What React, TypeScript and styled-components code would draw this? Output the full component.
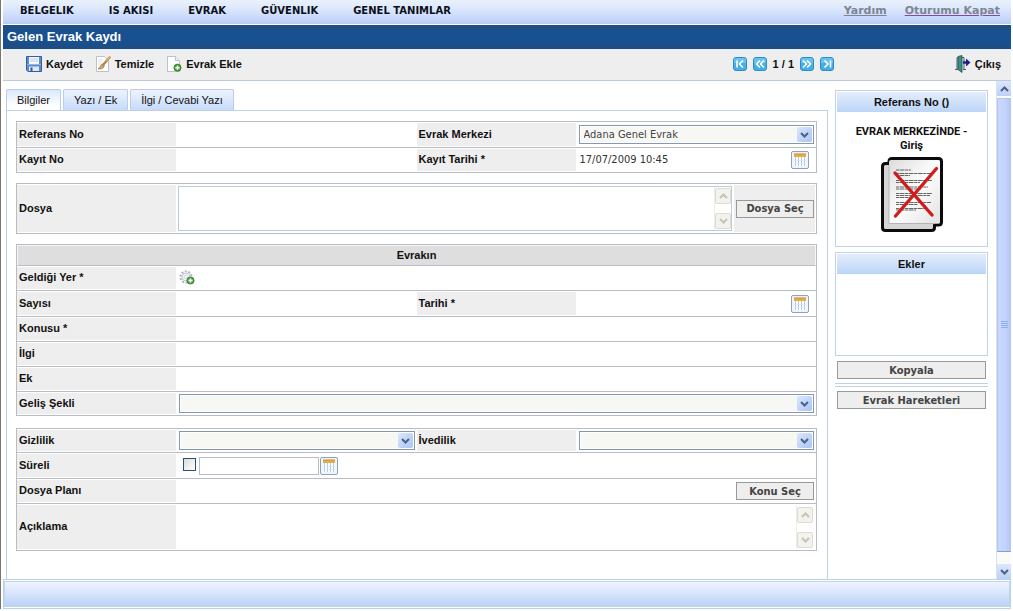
import React from "react";
import styled, { createGlobalStyle, css } from "styled-components";

const arial = `"Liberation Sans", Arial, sans-serif`;
const tahoma = `"DejaVu Sans Condensed", Tahoma, sans-serif`;
const verdana = `"DejaVu Sans", Verdana, sans-serif`;

const GlobalStyle = createGlobalStyle`
  *, *::before, *::after { box-sizing: border-box; }
  body { margin: 0; background: #fff; color: #111; font: 11px/14px ${arial}; }
  button, input, select, textarea { font: inherit; color: inherit; margin: 0; }
  button { cursor: pointer; }
  svg { display: block; flex: none; }
`;

const blueFade = css`
  background: linear-gradient(#e4edfb, #bcd5f8);
`;

/* ---------- page frame ---------- */

const Page = styled.div`
  display: flex;
  flex-direction: column;
  min-height: 100vh;
  padding-bottom: 2px;
`;

const Frame = styled.div`
  flex: 1;
  display: flex;
  flex-direction: column;
  border-left: 1px solid #7b766c;
  padding: 0 2px;
`;

const MenuBar = styled.header`
  display: flex;
  justify-content: space-between;
  height: 24px;
  padding: 0 11px 2px 17px;
  border-bottom: 1px solid #b4cfe8;
  background: linear-gradient(#e9f1fb, #dbe7fc 40%, #bdd0fa);
`;

const Menu = styled.nav`
  display: flex;
  align-items: center;
  gap: 35px;
`;

const MenuItem = styled.a`
  color: #0b0f1a;
  font: bold 10px/20px ${verdana};
  text-decoration: none;
`;

const Session = styled(Menu)`
  gap: 18px;
`;

const SessionLink = styled.a<{ $visited?: boolean }>`
  color: #7d8594;
  font: bold 11px/20px ${verdana};
  text-decoration: underline;
  text-decoration-color: ${(p) => (p.$visited ? "#8a4a90" : "#7d8594")};
`;

const TitleBar = styled.h1`
  height: 24px;
  margin: 1px 0 0;
  padding: 0 4px;
  background: linear-gradient(#1f4f7d, #195091 30%, #195091 70%, #204c7d);
  color: #fff;
  font: bold 13px/24px ${arial};
`;

const Toolbar = styled.div`
  display: flex;
  align-items: center;
  height: 32px;
  padding: 0 10px 3px 23px;
  border-top: 2px solid #e6f1fb;
  border-bottom: 1px solid #bccbd8;
  background: #eee;
`;

const Tools = styled.div`
  flex: 1;
  display: flex;
  gap: 12px;
`;

const ToolButton = styled.button`
  display: flex;
  align-items: center;
  gap: 4px;
  padding: 0;
  border: 0;
  background: none;
  font-weight: bold;
  line-height: 16px;
`;

const Pager = styled.div`
  display: flex;
  align-items: center;
  gap: 6px;
  font-weight: bold;
`;

const PagerButton = styled.button`
  display: block;
  padding: 0;
  border: 0;
  background: none;
`;

const ExitArea = styled.div`
  display: flex;
  justify-content: flex-end;
  width: 167px;
`;

/* ---------- content ---------- */

const Content = styled.div`
  flex: 1;
  display: flex;
`;

const Main = styled.main`
  flex: 1;
  display: flex;
  flex-direction: column;
  min-width: 0;
  padding: 8px 0 0 3px;
`;

const Tabs = styled.div`
  display: flex;
  gap: 2px;
`;

const Tab = styled.button<{ $active?: boolean }>`
  height: 21px;
  padding: 0 10px;
  border: 1px solid #b9cdee;
  border-bottom: 0;
  border-radius: 2px 2px 0 0;
  background: ${(p) => (p.$active ? "linear-gradient(#dce9fb, #fff 80%)" : "linear-gradient(#eef4fd, #c6dafa)")};
`;

const Sheet = styled.div`
  flex: 1;
  display: flex;
  flex-direction: column;
  gap: 10px;
  padding: 10px 10px 28px 9px;
  border: 1px solid #bfd0e0;
  border-bottom: 0;
`;

const Block = styled.section`
  border: 1px solid #b9bcc4;
  border-bottom: 0;
`;

const LastBlock = styled(Block)`
  margin-top: 2px;
`;

const Row = styled.div<{ $split?: boolean; $height?: number }>`
  display: grid;
  grid-template-columns: ${(p) => (p.$split ? "160px 1fr 160px 1fr" : "160px 1fr")};
  height: ${(p) => p.$height ?? 25}px;
  border-bottom: 1px solid #b9bcc4;
`;

const FileRow = styled(Row)`
  grid-template-columns: 160px 1fr 82px;
`;

const Label = styled.label`
  display: flex;
  align-items: center;
  margin: 1px 1px 1px 0;
  padding: 0 0 2px 2px;
  background: #eee;
  font-weight: bold;
`;

const Field = styled.div`
  display: flex;
  align-items: center;
  gap: 1px;
  min-width: 0;
  padding: 0 2px;
`;

const DateField = styled(Field)`
  padding-right: 7px;
`;

const SectionTitle = styled.h2`
  height: 21px;
  margin: 0;
  border: 1px solid #f6f6f6;
  border-bottom: 1px solid #b9bcc4;
  background: #dedede;
  font: bold 11px/19px ${arial};
  text-align: center;
`;

const TextInput = styled.input`
  flex: 1;
  min-width: 0;
  height: 18px;
  padding: 0 1px;
  border: 0;
  background: transparent;
  color: #333;
  font: 11px/18px ${tahoma};
`;

const DateInput = styled(TextInput)`
  flex: none;
  width: 120px;
  border: 1px solid #b5bdc6;
`;

const CheckBox = styled.input`
  appearance: none;
  width: 13px;
  height: 13px;
  margin: 0 2px 2px 4px;
  border: 1px solid #2b5078;
  background: linear-gradient(135deg, #dcdcd7, #fff);
`;

const SelectShell = styled.div`
  position: relative;
  flex: 1;
  min-width: 0;
`;

const SelectBox = styled.select`
  appearance: none;
  display: block;
  width: 100%;
  height: 19px;
  padding: 0 18px 0 4px;
  border: 1px solid #8199b4;
  border-radius: 0;
  background: #f7f8f4;
  box-shadow: inset 0 0 0 1px #fff;
  color: #444;
  font: 11px/17px ${tahoma};
`;

const SelectArrow = styled.span`
  position: absolute;
  top: 2px;
  right: 2px;
  display: grid;
  place-items: center;
  width: 15px;
  height: 15px;
  border-radius: 2px;
  background: linear-gradient(135deg, #dbe7fd, #aac4f4);
  pointer-events: none;
`;

const IconButton = styled.button`
  display: block;
  padding: 0;
  border: 0;
  background: none;
`;

const AreaShell = styled.div<{ $framed?: boolean }>`
  flex: 1;
  display: flex;
  height: 45px;
  min-width: 0;
  margin-left: -1px;
  border: 1px solid ${(p) => (p.$framed ? "#bccbdb" : "transparent")};
`;

const Area = styled.textarea`
  flex: 1;
  min-width: 0;
  padding: 2px;
  border: 0;
  background: transparent;
  resize: none;
  font: 11px/14px ${tahoma};
`;

const AreaScroll = styled.div`
  display: flex;
  flex-direction: column;
  justify-content: space-between;
  width: 17px;
  padding: 1px 0;
  border-left: 1px solid #eeede5;
`;

const AreaScrollButton = styled.button`
  display: grid;
  place-items: center;
  width: 16px;
  height: 16px;
  padding: 0;
  border: 1px solid #dddcd2;
  border-radius: 2px;
  background: #f3f2ec;
`;

const PushButton = styled.button<{ $wide?: boolean }>`
  width: ${(p) => (p.$wide ? "auto" : "78px")};
  height: 18px;
  margin: ${(p) => (p.$wide ? "0 2px" : "0")};
  padding: 0;
  border: 1px solid #999;
  background: #eee;
  color: #444;
  font: bold 11px/15px ${tahoma};
`;

const ButtonCell = styled.div`
  display: flex;
  align-items: center;
  justify-content: flex-end;
  margin: 1px 1px 1px 0;
  padding-right: 1px;
  background: #eee;
`;

/* ---------- side column ---------- */

const Side = styled.aside`
  display: flex;
  flex-direction: column;
  width: 168px;
  padding: 9px 8px 0 7px;
`;

const Card = styled.section<{ $height: number }>`
  min-height: ${(p) => p.$height}px;
  margin-bottom: 5px;
  padding: 1px;
  border: 1px solid #bfd3e4;
`;

const CardTitle = styled.h2`
  ${blueFade}
  height: 20px;
  margin: 0;
  font: bold 11px/20px ${arial};
  text-align: center;
`;

const Status = styled.p`
  margin: 13px 0 4px;
  font: bold 11px/14px Roboto, ${arial};
  text-align: center;
`;

const Picture = styled.div`
  display: flex;
  justify-content: center;
`;

const Divider = styled.hr`
  width: 100%;
  height: 4px;
  margin: 4px 0;
  border: solid #bcd2e8;
  border-width: 1px 0;
`;

const ScrollBar = styled.div`
  display: flex;
  flex-direction: column;
  width: 15px;
  border-left: 1px solid #d5e4f0;
  background: #fafaf6;
`;

const ScrollArrow = styled.button`
  display: grid;
  place-items: center;
  width: 14px;
  height: 15px;
  padding: 0;
  border: 0;
  background: linear-gradient(#dce7fd, #bcd0f8);
`;

const ScrollThumb = styled.div`
  flex: 1;
  display: grid;
  place-items: center;
  margin: 2px 0 12px;
  border: 1px solid #b3c6ee;
  border-bottom-color: #7d9fd3;
  background: linear-gradient(90deg, #cad8fd, #c3d3fd 60%, #b4c7f6);
`;

const Footer = styled.footer`
  height: 30px;
  padding: 1px 0;
  border: 1px solid #b5d4e6;
`;

const FooterFill = styled.div`
  height: 100%;
  border: 1px solid #bdd6ea;
  background: linear-gradient(#f1f3fe, #dbe7fc 40%, #b9d3f7);
`;

/* ---------- drawings ---------- */

const Chevron = ({ up, color = "#4a6185" }: { up?: boolean; color?: string }) => (
  <svg width="9" height="6" viewBox="0 0 9 6" aria-hidden="true">
    <path d={up ? "M1 5 4.5 1.5 8 5" : "M1 1 4.5 4.5 8 1"} fill="none" stroke={color} strokeWidth="2" />
  </svg>
);

const SaveIcon = () => (
  <svg width="16" height="16" viewBox="0 0 16 16" aria-hidden="true">
    <path d="M.5 .5h15v15H2L.5 14z" fill="#5b8bd0" stroke="#335f9f" />
    <path d="M3 1h10v7H3z" fill="#f5f9ff" />
    <path d="M4 3h8M4 5h8" stroke="#b9cde8" />
    <path d="M1 8.500h14" stroke="#8fb4e8" />
    <path d="M3 10.500h10V15H3z" fill="#dfe8f4" />
    <path d="M4.500 11.500h2V15h-2z" fill="#35588c" />
  </svg>
);

const PageShape = () => (
  <path d="M1.500 .5h8l4 4v11h-12z" fill="#fff" stroke="#b9c2ce" />
);

const ClearIcon = () => (
  <svg width="16" height="16" viewBox="0 0 16 16" aria-hidden="true">
    <PageShape />
    <path d="M3 4h5M3 6h4M3 8h3" stroke="#dde3ea" />
    <path d="M14.500 1.500 8 9" stroke="#b98544" strokeWidth="2.400" strokeLinecap="round" />
    <path d="M14.700 1.200 11.500 4.800" stroke="#e7b873" strokeWidth="1.200" />
    <path d="M9.300 9.800 7.200 7.900C5.400 9 5.600 11 3 12.800c2.600.7 5.800-.2 6.300-3z" fill="#e0a043" stroke="#8b6a45" strokeWidth=".6" />
    <path d="m7 8.200 2.200 2" stroke="#8a96a4" strokeWidth="1.200" />
  </svg>
);

const AddMark = ({ x, y }: { x: number; y: number }) => (
  <g transform={`translate(${x} ${y})`}>
    <circle r="3.600" fill="#52a043" stroke="#2f7a2b" strokeWidth=".8" />
    <path d="M-2 0h4M0-2v4" stroke="#fff" strokeWidth="1.400" />
  </g>
);

const AddPageIcon = () => (
  <svg width="16" height="16" viewBox="0 0 16 16" aria-hidden="true">
    <PageShape />
    <path d="M9.500 .5v4h4" fill="#edf1f6" stroke="#b9c2ce" />
    <AddMark x={11.5} y={11.7} />
  </svg>
);

const AddGearIcon = () => (
  <svg width="16" height="16" viewBox="0 0 16 16" aria-hidden="true">
    <circle cx="7" cy="7" r="5.600" fill="none" stroke="#aeb7bd" strokeWidth="2" strokeDasharray="2 1.500" />
    <circle cx="7" cy="7" r="4" fill="#eef1f3" stroke="#c6cdd2" />
    <circle cx="7" cy="7" r="1.500" fill="#fff" stroke="#bfc7cc" strokeWidth=".6" />
    <AddMark x={11.5} y={10.5} />
  </svg>
);

const CalendarIcon = () => (
  <svg width="18" height="18" viewBox="0 0 18 18" aria-hidden="true">
    <rect x=".5" y=".5" width="17" height="17" rx="1.500" fill="#f1f5fa" stroke="#8ba3bb" />
    <path d="M3 6h12v9H3z" fill="#fdfeff" />
    <path d="M3 2.500h12V6H3z" fill="#e3ad48" />
    <path d="M3 3.200h12" stroke="#cf9a3a" />
    <path d="M4.500 6v9M7.500 6v9M10.500 6v9M13.500 6v9" stroke="#b4cae2" />
    <path d="M3 9.500h12M3 12.500h12" stroke="#d6e4f2" strokeWidth=".7" />
  </svg>
);

const pagerPaths = {
  first: "M4 3.500v7M10 3.500 6.500 7l3.500 3.500",
  prev: "M7 3.500 3.500 7 7 10.500M11 3.500 7.500 7l3.500 3.500",
  next: "M3 3.500 6.500 7 3 10.500M7 3.500 10.500 7 7 10.500",
  last: "M10.500 3.500v7M4.500 3.500 8 7l-3.500 3.500",
};

const PagerIcon = ({ kind }: { kind: keyof typeof pagerPaths }) => (
  <svg width="14" height="14" viewBox="0 0 14 14" aria-hidden="true">
    <rect x=".5" y=".5" width="13" height="13" rx="2.500" fill="#45aee6" stroke="#2c8cc9" />
    <path d="M1 3a2 2 0 0 1 2-2h8a2 2 0 0 1 2 2v3H1z" fill="#68c1ee" />
    <path d={pagerPaths[kind]} fill="none" stroke="#fff" strokeWidth="1.600" />
  </svg>
);

const ExitIcon = () => (
  <svg width="16" height="18" viewBox="0 0 16 18" aria-hidden="true">
    <path d="M2 14V2.500h7V14" fill="#dfe6e6" stroke="#47625f" />
    <path d="M0 14.500h3M8 14.500h3" stroke="#47625f" />
    <path d="M3 1.500 7 .5v17l-4-3z" fill="#3f8f84" stroke="#1f4d4b" strokeWidth=".8" />
    <path d="M8 7.500h4" stroke="#1b1f8c" strokeWidth="2.400" />
    <path d="M11 3.500 15.500 7.500 11 11.500z" fill="#1b1f8c" />
  </svg>
);

const textLines = [
  [13, 15], [16.5, 36], [18.5, 14], [23.5, 36], [25.500, 24], [30, 32], [32, 25],
  [36.5, 36], [38.5, 34], [40.500, 14], [45.5, 35], [47.500, 22], [51.5, 32], [53, 20],
];

const CrossedPages = () => (
  <svg width="62" height="76" viewBox="0 0 62 76" role="img" aria-label="Evrak">
    <defs>
      <linearGradient id="paper" x1="0" y1="0" x2="1" y2="1">
        <stop offset="0" stopColor="#dcdcdc" />
        <stop offset=".5" stopColor="#fdfdfd" />
        <stop offset="1" stopColor="#e2e2e2" />
      </linearGradient>
    </defs>
    <path
      d="M8 6.500H4.500q-3 0-3 3v61q0 3 3 3h46q3 0 3-3V68h4q3 0 3-3V4.500q0-3-3-3H11q-3 0-3 3z"
      fill="#d6d6d6"
      stroke="#0b0b0b"
      strokeWidth="3"
      strokeLinejoin="round"
    />
    <path d="M8 5q0-2 2-2h47q2 0 2 2v60q0 1.500-2 1.500H8z" fill="url(#paper)" />
    <path d="M8 8v58.500h45" fill="none" stroke="#b5b5b5" />
    {textLines.map(([y, length]) => (
      <path key={y} d={`M15 ${y}h${length}`} stroke="#555" strokeWidth=".9" strokeDasharray="3 .5 5 .6" />
    ))}
    <path d="m14 16 37 42" stroke="#cf1b1b" strokeWidth="3.400" strokeLinecap="round" />
    <path d="M55.500 11.500 14.500 59" stroke="#d21d1d" strokeWidth="3.400" strokeLinecap="round" />
  </svg>
);

const Grip = () => (
  <svg width="7" height="8" viewBox="0 0 7 8" aria-hidden="true">
    <path d="M0 .5h7M0 2.500h7M0 4.500h7M0 6.500h7" stroke="#8fb0ea" />
  </svg>
);

/* ---------- parts ---------- */

const Select = ({ id, value }: { id: string; value?: string }) => (
  <SelectShell>
    <SelectBox id={id}>
      <option>{value ?? ""}</option>
    </SelectBox>
    <SelectArrow>
      <Chevron />
    </SelectArrow>
  </SelectShell>
);

const CalendarButton = ({ label }: { label: string }) => (
  <IconButton type="button" aria-label={label}>
    <CalendarIcon />
  </IconButton>
);

const ScrollArea = ({ id, framed }: { id: string; framed?: boolean }) => (
  <AreaShell $framed={framed}>
    <Area id={id} />
    <AreaScroll>
      <AreaScrollButton type="button" aria-label="Yukarı" disabled>
        <Chevron up color="#c5c4b8" />
      </AreaScrollButton>
      <AreaScrollButton type="button" aria-label="Aşağı" disabled>
        <Chevron color="#c5c4b8" />
      </AreaScrollButton>
    </AreaScroll>
  </AreaShell>
);

const TextRow = ({ id, label }: { id: string; label: string }) => (
  <Row>
    <Label htmlFor={id}>{label}</Label>
    <Field>
      <TextInput id={id} />
    </Field>
  </Row>
);

const menu = ["BELGELIK", "IS AKISI", "EVRAK", "GÜVENLIK", "GENEL TANIMLAR"];

export default function App() {
  return (
    <Page>
      <GlobalStyle />
      <Frame>
        <MenuBar>
          <Menu>
            {menu.map((item) => (
              <MenuItem key={item} href="#">{item}</MenuItem>
            ))}
          </Menu>
          <Session>
            <SessionLink href="#">Yardım</SessionLink>
            <SessionLink href="#" $visited>Oturumu Kapat</SessionLink>
          </Session>
        </MenuBar>
        <TitleBar>Gelen Evrak Kaydı</TitleBar>
        <Toolbar>
          <Tools>
            <ToolButton type="button"><SaveIcon />Kaydet</ToolButton>
            <ToolButton type="button"><ClearIcon />Temizle</ToolButton>
            <ToolButton type="button"><AddPageIcon />Evrak Ekle</ToolButton>
          </Tools>
          <Pager>
            <PagerButton type="button" aria-label="İlk"><PagerIcon kind="first" /></PagerButton>
            <PagerButton type="button" aria-label="Önceki"><PagerIcon kind="prev" /></PagerButton>
            <span>1 / 1</span>
            <PagerButton type="button" aria-label="Sonraki"><PagerIcon kind="next" /></PagerButton>
            <PagerButton type="button" aria-label="Son"><PagerIcon kind="last" /></PagerButton>
          </Pager>
          <ExitArea>
            <ToolButton type="button"><ExitIcon />Çıkış</ToolButton>
          </ExitArea>
        </Toolbar>

        <Content>
          <Main>
            <Tabs role="tablist">
              <Tab type="button" role="tab" aria-selected="true" $active>Bilgiler</Tab>
              <Tab type="button" role="tab" aria-selected="false">Yazı / Ek</Tab>
              <Tab type="button" role="tab" aria-selected="false">İlgi / Cevabi Yazı</Tab>
            </Tabs>
            <Sheet>
              <Block>
                <Row $split $height={26}>
                  <Label htmlFor="referans">Referans No</Label>
                  <Field><TextInput id="referans" /></Field>
                  <Label htmlFor="merkez">Evrak Merkezi</Label>
                  <Field><Select id="merkez" value="Adana Genel Evrak" /></Field>
                </Row>
                <Row $split>
                  <Label htmlFor="kayit">Kayıt No</Label>
                  <Field><TextInput id="kayit" /></Field>
                  <Label htmlFor="kayitTarihi">Kayıt Tarihi *</Label>
                  <DateField>
                    <TextInput id="kayitTarihi" defaultValue="17/07/2009 10:45" />
                    <CalendarButton label="Kayıt tarihi seç" />
                  </DateField>
                </Row>
              </Block>

              <Block>
                <FileRow $height={50}>
                  <Label htmlFor="dosya">Dosya</Label>
                  <Field><ScrollArea id="dosya" framed /></Field>
                  <ButtonCell><PushButton type="button">Dosya Seç</PushButton></ButtonCell>
                </FileRow>
              </Block>

              <Block>
                <SectionTitle>Evrakın</SectionTitle>
                <Row>
                  <Label as="span">Geldiği Yer *</Label>
                  <Field>
                    <IconButton type="button" aria-label="Geldiği yer ekle"><AddGearIcon /></IconButton>
                  </Field>
                </Row>
                <Row $split $height={26}>
                  <Label htmlFor="sayi">Sayısı</Label>
                  <Field><TextInput id="sayi" /></Field>
                  <Label htmlFor="tarih">Tarihi *</Label>
                  <DateField>
                    <TextInput id="tarih" />
                    <CalendarButton label="Tarih seç" />
                  </DateField>
                </Row>
                <TextRow id="konu" label="Konusu *" />
                <TextRow id="ilgi" label="İlgi" />
                <TextRow id="ek" label="Ek" />
                <Row $height={24}>
                  <Label htmlFor="gelis">Geliş Şekli</Label>
                  <Field><Select id="gelis" /></Field>
                </Row>
              </Block>

              <LastBlock>
                <Row $split $height={24}>
                  <Label htmlFor="gizlilik">Gizlilik</Label>
                  <Field><Select id="gizlilik" /></Field>
                  <Label htmlFor="ivedilik">İvedilik</Label>
                  <Field><Select id="ivedilik" /></Field>
                </Row>
                <Row $height={26}>
                  <Label htmlFor="sureli">Süreli</Label>
                  <Field>
                    <CheckBox id="sureli" type="checkbox" />
                    <DateInput aria-label="Süre tarihi" />
                    <CalendarButton label="Süre tarihi seç" />
                  </Field>
                </Row>
                <Row>
                  <Label htmlFor="plan">Dosya Planı</Label>
                  <Field>
                    <TextInput id="plan" />
                    <PushButton type="button">Konu Seç</PushButton>
                  </Field>
                </Row>
                <Row $height={47}>
                  <Label htmlFor="aciklama">Açıklama</Label>
                  <Field><ScrollArea id="aciklama" /></Field>
                </Row>
              </LastBlock>
            </Sheet>
          </Main>

          <Side>
            <Card $height={157}>
              <CardTitle>Referans No ()</CardTitle>
              <Status>
                EVRAK MERKEZİNDE -<br />Giriş
              </Status>
              <Picture><CrossedPages /></Picture>
            </Card>
            <Card $height={104}>
              <CardTitle>Ekler</CardTitle>
            </Card>
            <PushButton type="button" $wide>Kopyala</PushButton>
            <Divider />
            <PushButton type="button" $wide>Evrak Hareketleri</PushButton>
          </Side>

          <ScrollBar>
            <ScrollArrow type="button" aria-label="Yukarı kaydır"><Chevron up /></ScrollArrow>
            <ScrollThumb><Grip /></ScrollThumb>
            <ScrollArrow type="button" aria-label="Aşağı kaydır"><Chevron /></ScrollArrow>
          </ScrollBar>
        </Content>

        <Footer>
          <FooterFill />
        </Footer>
      </Frame>
    </Page>
  );
}
